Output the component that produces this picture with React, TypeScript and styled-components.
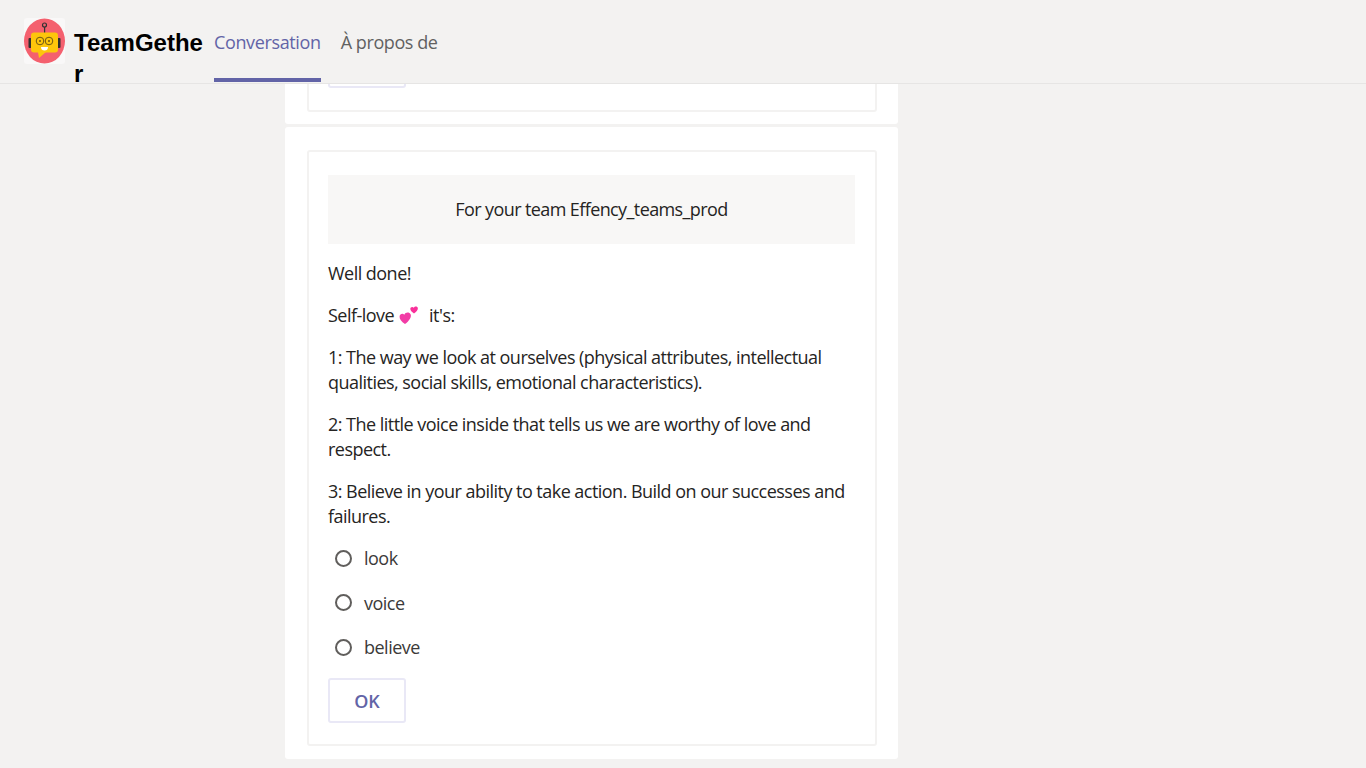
import React from "react";
import styled, { createGlobalStyle } from "styled-components";

const GlobalStyle = createGlobalStyle`
  html, body {
    margin: 0;
    padding: 0;
    height: 100%;
    overflow: hidden;
    background: #f3f2f1;
    font-family: "Open Sans", "Noto Sans", "Liberation Sans", sans-serif;
  }
  * { box-sizing: border-box; }
`;

const Page = styled.div`
  width: 1366px;
  height: 768px;
  display: flex;
  flex-direction: column;
  overflow: hidden;
`;

const Header = styled.header`
  flex: none;
  height: 84px;
  display: flex;
  align-items: flex-start;
  padding-left: 24px;
  border-bottom: 1px solid #e6e5e4;
`;

const LogoTile = styled.div`
  flex: none;
  width: 41px;
  height: 46px;
  margin-top: 18px;
  background: #f9f8f8;
  border-radius: 3px;
`;

const Title = styled.h1`
  width: 131px;
  margin: 27px 0 0 9px;
  flex: none;
  font-family: "Liberation Sans", Arial, sans-serif;
  font-size: 24px;
  line-height: 31px;
  font-weight: 700;
  color: #000;
  word-break: break-all;
`;

const Tabs = styled.nav`
  display: flex;
  gap: 20px;
  margin-left: 9px;
  height: 83px;
`;

const Tab = styled.div<{ $active?: boolean }>`
  height: 82px;
  padding-top: 29px;
  font-size: 18px;
  line-height: 26px;
  font-weight: ${(p) => (p.$active ? 500 : 400)};
  color: ${(p) => (p.$active ? "#6264a7" : "#616161")};
  border-bottom: 4px solid ${(p) => (p.$active ? "#6264a7" : "transparent")};
  letter-spacing: ${(p) => (p.$active ? "-0.37px" : "-0.42px")};
`;

const Feed = styled.main`
  width: 613px;
  margin-left: 285px;
  flex: 1;
  min-height: 0;
  display: flex;
  flex-direction: column;
  gap: 3px;
`;

const Clipped = styled.div`
  flex: none;
  height: 40px;
  background: #fff;
  border-radius: 0 0 3px 3px;
  padding: 0 21px 12px 22px;
  display: flex;
  flex-direction: column;
  justify-content: flex-end;
  overflow: hidden;
`;

const Message = styled.section`
  flex: none;
  height: 632px;
  background: #fff;
  border-radius: 3px;
  padding: 23px 21px 13px 22px;
`;

const Card = styled.div`
  height: 100%;
  border: 2px solid #f3f2f1;
  border-radius: 3px;
  padding: 23px 20px 0 19px;
`;

const ClippedCard = styled(Card)`
  flex: none;
  height: 100px;
  padding-top: 0;
  display: flex;
  flex-direction: column;
  justify-content: flex-end;
  padding-bottom: 22px;
`;

const Banner = styled.div`
  height: 69px;
  background: #f8f7f6;
  display: flex;
  align-items: center;
  justify-content: center;
  padding-bottom: 2px;
  font-size: 18px;
  color: #252423;
  letter-spacing: -0.6px;
`;

const Body = styled.div`
  margin-top: 17px;
`;

const Para = styled.p`
  margin: 0 0 17px;
  font-size: 18px;
  line-height: 25px;
  color: #252423;
  letter-spacing: -0.53px;
`;

const Hearts = styled.svg`
  width: 19px;
  height: 20px;
  margin: 0 11px 0 5px;
  vertical-align: -3px;
`;

const Options = styled.div`
  display: flex;
  flex-direction: column;
  gap: 18.5px;
  padding-left: 7px;
  margin-top: -1px;
`;

const Option = styled.label`
  display: flex;
  align-items: center;
  gap: 12px;
  height: 26px;
  font-size: 18px;
  color: #3b3a39;
  letter-spacing: -0.5px;
`;

const Radio = styled.span`
  width: 17px;
  height: 17px;
  border: 2px solid #605e5c;
  border-radius: 50%;
`;

const OkButton = styled.button`
  display: block;
  flex: none;
  width: 78px;
  height: 45px;
  margin-top: 18px;
  background: #fff;
  border: 2px solid #e9e8f6;
  border-radius: 3px;
  font-family: inherit;
  font-size: 18px;
  font-weight: 600;
  color: #6264a7;
  padding: 0;
`;

const Logo = () => (
  <svg width="41" height="46" viewBox="0 0 41 46">
    <ellipse cx="20.5" cy="23" rx="20.5" ry="22.5" fill="#f4606e" />
    <circle cx="20.5" cy="7" r="2" fill="none" stroke="#333" strokeWidth="1.2" />
    <rect x="20" y="9" width="1.2" height="6" fill="#333" />
    <rect x="4.5" y="20" width="3" height="10" rx="1" fill="#2f2f2f" />
    <rect x="33.5" y="20" width="3" height="10" rx="1" fill="#2f2f2f" />
    <rect x="7" y="14.500" width="27" height="20" rx="3" fill="#fdc60b" />
    <path d="M14 34h8l-7 6z" fill="#fdc60b" />
    <circle cx="16" cy="23" r="3.800" fill="none" stroke="#6b5514" strokeWidth="1" />
    <circle cx="25" cy="23" r="3.800" fill="none" stroke="#6b5514" strokeWidth="1" />
    <circle cx="16" cy="23" r="1" fill="#6b5514" />
    <circle cx="25" cy="23" r="1" fill="#6b5514" />
    <path d="M17 29h7a3.500 3.500 0 0 1-7 0z" fill="#fff" />
  </svg>
);

const TwoHearts = () => (
  <Hearts viewBox="0 0 19 20">
    <path
      d="M6 19C2.400 16.600.2 14 .6 11.200 1 8.800 3.800 8 5.300 9.800c1-2.800 5-3 6.300-.6 1.300 2.800-1.500 6.800-5.600 9.800z"
      fill="#f23ca6"
    />
    <path
      d="M15 8.500c-2.300-1.500-3.800-3-3.700-4.800.1-1.800 2.300-2.500 3.500-1 .8-1.700 3.700-1.700 4 .3.300 1.800-1.300 3.700-3.800 5.500z"
      fill="#f9309a"
    />
  </Hearts>
);

export default function App() {
  return (
    <>
      <GlobalStyle />
      <Page>
        <Header>
          <LogoTile>
            <Logo />
          </LogoTile>
          <Title>TeamGether</Title>
          <Tabs>
            <Tab $active>Conversation</Tab>
            <Tab>À propos de</Tab>
          </Tabs>
        </Header>
        <Feed>
          <Clipped>
            <ClippedCard>
              <OkButton />
            </ClippedCard>
          </Clipped>
          <Message>
            <Card>
              <Banner>For your team Effency_teams_prod</Banner>
              <Body>
                <Para>Well done!</Para>
                <Para>
                  Self-love
                  <TwoHearts />
                  it's:
                </Para>
                <Para>
                  1: The way we look at ourselves (physical attributes, intellectual qualities,
                  social skills, emotional characteristics).
                </Para>
                <Para>
                  2: The little voice inside that tells us we are worthy of love and respect.
                </Para>
                <Para>
                  3: Believe in your ability to take action. Build on our successes and failures.
                </Para>
              </Body>
              <Options>
                <Option>
                  <Radio />
                  look
                </Option>
                <Option>
                  <Radio />
                  voice
                </Option>
                <Option>
                  <Radio />
                  believe
                </Option>
              </Options>
              <OkButton>OK</OkButton>
            </Card>
          </Message>
        </Feed>
      </Page>
    </>
  );
}
